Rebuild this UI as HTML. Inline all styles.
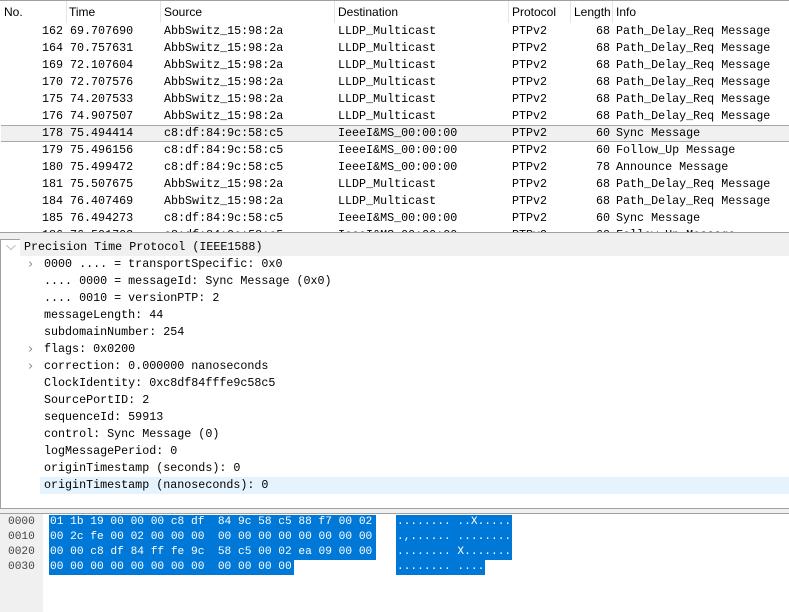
<!DOCTYPE html>
<html><head><style>
body{margin:0;width:789px;height:612px;overflow:hidden;background:#fff;font-family:"Liberation Mono",monospace;font-size:11.7px;color:#000;position:relative}
.hdr{position:absolute;top:1px;height:23px;font-family:"Liberation Sans",sans-serif;font-size:12px;line-height:23px;color:#000}
.sep{position:absolute;top:1px;width:1px;height:22px;background:#e5e5e5}
.r{position:absolute;left:0;width:789px;height:17px;line-height:17px}
.r span{position:absolute;white-space:pre}
.d{position:absolute;white-space:pre;height:17px;line-height:17px}
.chev{position:absolute;color:#888;font-family:"DejaVu Sans",sans-serif;font-size:13px;line-height:17px}
.hx{position:absolute;white-space:pre;height:15px;line-height:15px;font-size:11.2px}
.bl{background:#0078d7;color:#fff}
</style></head><body>
<div style="position:absolute;left:0;top:0;width:789px;height:1px;background:#a0a0a0"></div>
<div class="hdr" style="left:4px">No.</div>
<div class="hdr" style="left:69px">Time</div>
<div class="hdr" style="left:164px">Source</div>
<div class="hdr" style="left:338px">Destination</div>
<div class="hdr" style="left:512px">Protocol</div>
<div class="hdr" style="left:574px">Length</div>
<div class="hdr" style="left:616px">Info</div>
<div class="sep" style="left:66px"></div><div class="sep" style="left:160px"></div><div class="sep" style="left:334px"></div><div class="sep" style="left:508px"></div><div class="sep" style="left:570px"></div><div class="sep" style="left:612px"></div>

<div class="r" style="top:23px"><span style="left:42px">162</span><span style="left:70px">69.707690</span><span style="left:164px">AbbSwitz_15:98:2a</span><span style="left:338px">LLDP_Multicast</span><span style="left:512px">PTPv2</span><span style="left:596px">68</span><span style="left:616px">Path_Delay_Req Message</span></div>
<div class="r" style="top:40px"><span style="left:42px">164</span><span style="left:70px">70.757631</span><span style="left:164px">AbbSwitz_15:98:2a</span><span style="left:338px">LLDP_Multicast</span><span style="left:512px">PTPv2</span><span style="left:596px">68</span><span style="left:616px">Path_Delay_Req Message</span></div>
<div class="r" style="top:57px"><span style="left:42px">169</span><span style="left:70px">72.107604</span><span style="left:164px">AbbSwitz_15:98:2a</span><span style="left:338px">LLDP_Multicast</span><span style="left:512px">PTPv2</span><span style="left:596px">68</span><span style="left:616px">Path_Delay_Req Message</span></div>
<div class="r" style="top:74px"><span style="left:42px">170</span><span style="left:70px">72.707576</span><span style="left:164px">AbbSwitz_15:98:2a</span><span style="left:338px">LLDP_Multicast</span><span style="left:512px">PTPv2</span><span style="left:596px">68</span><span style="left:616px">Path_Delay_Req Message</span></div>
<div class="r" style="top:91px"><span style="left:42px">175</span><span style="left:70px">74.207533</span><span style="left:164px">AbbSwitz_15:98:2a</span><span style="left:338px">LLDP_Multicast</span><span style="left:512px">PTPv2</span><span style="left:596px">68</span><span style="left:616px">Path_Delay_Req Message</span></div>
<div class="r" style="top:108px"><span style="left:42px">176</span><span style="left:70px">74.907507</span><span style="left:164px">AbbSwitz_15:98:2a</span><span style="left:338px">LLDP_Multicast</span><span style="left:512px">PTPv2</span><span style="left:596px">68</span><span style="left:616px">Path_Delay_Req Message</span></div>
<div class="r" style="top:125px;background:#f0f0f0;border-top:1px solid #a8a8a8;border-bottom:1px solid #a8a8a8;height:15px;line-height:15px;left:1px;width:788px"><span style="left:41px">178</span><span style="left:69px">75.494414</span><span style="left:163px">c8:df:84:9c:58:c5</span><span style="left:337px">IeeeI&amp;MS_00:00:00</span><span style="left:511px">PTPv2</span><span style="left:595px">60</span><span style="left:615px">Sync Message</span></div>
<div class="r" style="top:142px"><span style="left:42px">179</span><span style="left:70px">75.496156</span><span style="left:164px">c8:df:84:9c:58:c5</span><span style="left:338px">IeeeI&amp;MS_00:00:00</span><span style="left:512px">PTPv2</span><span style="left:596px">60</span><span style="left:616px">Follow_Up Message</span></div>
<div class="r" style="top:159px"><span style="left:42px">180</span><span style="left:70px">75.499472</span><span style="left:164px">c8:df:84:9c:58:c5</span><span style="left:338px">IeeeI&amp;MS_00:00:00</span><span style="left:512px">PTPv2</span><span style="left:596px">78</span><span style="left:616px">Announce Message</span></div>
<div class="r" style="top:176px"><span style="left:42px">181</span><span style="left:70px">75.507675</span><span style="left:164px">AbbSwitz_15:98:2a</span><span style="left:338px">LLDP_Multicast</span><span style="left:512px">PTPv2</span><span style="left:596px">68</span><span style="left:616px">Path_Delay_Req Message</span></div>
<div class="r" style="top:193px"><span style="left:42px">184</span><span style="left:70px">76.407469</span><span style="left:164px">AbbSwitz_15:98:2a</span><span style="left:338px">LLDP_Multicast</span><span style="left:512px">PTPv2</span><span style="left:596px">68</span><span style="left:616px">Path_Delay_Req Message</span></div>
<div class="r" style="top:210px"><span style="left:42px">185</span><span style="left:70px">76.494273</span><span style="left:164px">c8:df:84:9c:58:c5</span><span style="left:338px">IeeeI&amp;MS_00:00:00</span><span style="left:512px">PTPv2</span><span style="left:596px">60</span><span style="left:616px">Sync Message</span></div>
<div class="r" style="top:227px;height:5px;overflow:hidden"><span style="left:42px">186</span><span style="left:70px">76.501703</span><span style="left:164px">c8:df:84:9c:58:c5</span><span style="left:338px">IeeeI&amp;MS_00:00:00</span><span style="left:512px">PTPv2</span><span style="left:596px">60</span><span style="left:616px">Follow_Up Message</span></div>

<div style="position:absolute;left:0;top:232px;width:789px;height:6px;background:#f0f0f0;border-top:1px solid #a0a0a0;border-bottom:1px solid #a0a0a0"></div>
<div style="position:absolute;left:0;top:239px;width:1px;height:270px;background:#a0a0a0"></div>
<div style="position:absolute;left:20px;top:239px;width:769px;height:17px;background:#f0f0f0"></div>
<div class="chev" style="left:6px;top:238px">&#x2335;</div>
<div class="d" style="left:24px;top:239px">Precision Time Protocol (IEEE1588)</div>
<div class="chev" style="left:28px;top:256px">&#x203A;</div>
<div class="d" style="left:44px;top:256px">0000 .... = transportSpecific: 0x0</div>
<div class="d" style="left:44px;top:273px">.... 0000 = messageId: Sync Message (0x0)</div>
<div class="d" style="left:44px;top:290px">.... 0010 = versionPTP: 2</div>
<div class="d" style="left:44px;top:307px">messageLength: 44</div>
<div class="d" style="left:44px;top:324px">subdomainNumber: 254</div>
<div class="chev" style="left:28px;top:341px">&#x203A;</div>
<div class="d" style="left:44px;top:341px">flags: 0x0200</div>
<div class="chev" style="left:28px;top:358px">&#x203A;</div>
<div class="d" style="left:44px;top:358px">correction: 0.000000 nanoseconds</div>
<div class="d" style="left:44px;top:375px">ClockIdentity: 0xc8df84fffe9c58c5</div>
<div class="d" style="left:44px;top:392px">SourcePortID: 2</div>
<div class="d" style="left:44px;top:409px">sequenceId: 59913</div>
<div class="d" style="left:44px;top:426px">control: Sync Message (0)</div>
<div class="d" style="left:44px;top:443px">logMessagePeriod: 0</div>
<div class="d" style="left:44px;top:460px">originTimestamp (seconds): 0</div>
<div style="position:absolute;left:40px;top:477px;width:749px;height:17px;background:#e5f3ff"></div>
<div class="d" style="left:44px;top:477px">originTimestamp (nanoseconds): 0</div>

<div style="position:absolute;left:0;top:508px;width:789px;height:4px;background:#f0f0f0;border-top:1px solid #a0a0a0;border-bottom:1px solid #a0a0a0"></div>
<div style="position:absolute;left:0;top:514px;width:43px;height:98px;background:#f0f0f0"></div>
<div class="hx" style="left:8px;top:515px;color:#444">0000</div>
<div class="hx" style="left:8px;top:530px;color:#444">0010</div>
<div class="hx" style="left:8px;top:545px;color:#444">0020</div>
<div class="hx" style="left:8px;top:560px;color:#444">0030</div>
<div class="hx bl" style="left:49px;top:515px;width:326px;padding-left:1px;overflow:hidden">01 1b 19 00 00 00 c8 df  84 9c 58 c5 88 f7 00 02</div>
<div class="hx bl" style="left:49px;top:530px;width:326px;padding-left:1px;overflow:hidden">00 2c fe 00 02 00 00 00  00 00 00 00 00 00 00 00</div>
<div class="hx bl" style="left:49px;top:545px;width:326px;padding-left:1px;overflow:hidden">00 00 c8 df 84 ff fe 9c  58 c5 00 02 ea 09 00 00</div>
<div class="hx bl" style="left:49px;top:560px;width:244px;padding-left:1px">00 00 00 00 00 00 00 00  00 00 00 00</div>
<div class="hx bl" style="left:396px;top:515px;width:115px;padding-left:1px;overflow:hidden">........ ..X.....</div>
<div class="hx bl" style="left:396px;top:530px;width:115px;padding-left:1px;overflow:hidden">.,...... ........</div>
<div class="hx bl" style="left:396px;top:545px;width:115px;padding-left:1px;overflow:hidden">........ X.......</div>
<div class="hx bl" style="left:396px;top:560px;width:88px;padding-left:1px">........ ....</div>
</body></html>
